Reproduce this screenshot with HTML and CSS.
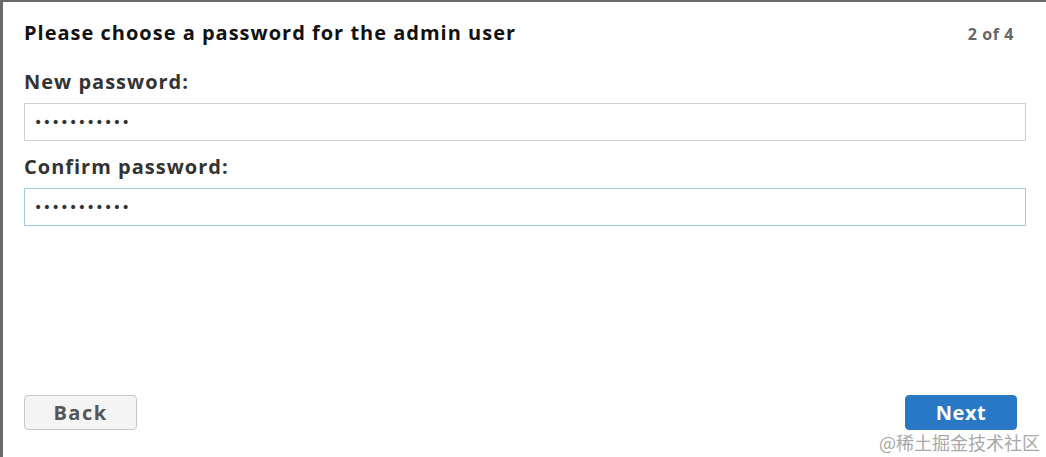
FILE: index.html
```html
<!DOCTYPE html>
<html>
<head>
<meta charset="utf-8">
<link rel="stylesheet" href="styles.css">
</head>
<body>
<div class="frame">
  <div class="dialog">
    <div class="header">
      <h1 class="title">Please choose a password for the admin user</h1>
      <span class="step">2 of 4</span>
    </div>
    <label class="label" for="pw1">New password:</label>
    <input class="field" id="pw1" type="password" value="abcdefghijk">
    <label class="label" for="pw2">Confirm password:</label>
    <input class="field field-focus" id="pw2" type="password" value="abcdefghijk">
    <div class="spacer"></div>
    <div class="actions">
      <button class="btn btn-back">Back</button>
      <button class="btn btn-next">Next</button>
    </div>
  </div>
  <div class="watermark">@稀土掘金技术社区</div>
</div>
</body>
</html>
```
FILE: styles.css
```css
html, body {
  margin: 0;
  padding: 0;
  background: #fff;
}
.frame {
  position: relative;
  width: 1046px;
  height: 457px;
  box-sizing: border-box;
  border-left: 3px solid #6a6a6a;
  border-top: 2px solid #6a6a6a;
  background: #fff;
  font-family: "Open Sans", sans-serif;
}
.dialog {
  display: flex;
  flex-direction: column;
  height: 100%;
  box-sizing: border-box;
  padding: 19px 20px 27px 21px;
}
.header {
  display: flex;
  justify-content: space-between;
  align-items: baseline;
  padding-right: 13px;
}
.title {
  margin: 0;
  font-size: 20px;
  font-weight: 700;
  color: #111;
  line-height: 24px;
  letter-spacing: 1px;
}
.step {
  font-size: 16px;
  font-weight: 700;
  color: #666;
  letter-spacing: 0.6px;
  margin-right: -1px;
}
.label {
  margin-top: 25px;
  font-size: 20px;
  font-weight: 700;
  color: #333;
  line-height: 24px;
  letter-spacing: 1px;
}
.field {
  margin-top: 9px;
  height: 38px;
  box-sizing: border-box;
  border: 1px solid #cfcfcf;
  padding: 0 9px;
  font-family: "DejaVu Sans", sans-serif;
  font-size: 14px;
  letter-spacing: 0.5px;
  color: #333;
  outline: none;
  background: #fff;
}
.field + .label {
  margin-top: 14px;
}
.field-focus {
  border-color: #9ecbe0;
}
.spacer {
  flex: 1;
}
.actions {
  display: flex;
  justify-content: space-between;
  padding-right: 9px;
}
.btn {
  width: 113px;
  height: 35px;
  box-sizing: border-box;
  border-radius: 4px;
  font-family: "Open Sans", sans-serif;
  font-size: 20px;
  font-weight: 700;
  padding: 0;
  line-height: 33px;
}
.btn-back {
  background: #f4f4f4;
  border: 1px solid #c8c8c8;
  color: #555;
  letter-spacing: 1.5px;
}
.btn-next {
  width: 112px;
  background: #2878c6;
  border: 1px solid #2878c6;
  color: #fff;
  letter-spacing: 0.5px;
}
.watermark {
  position: absolute;
  right: 6px;
  bottom: 4px;
  font-family: "Noto Sans CJK SC", sans-serif;
  font-size: 18px;
  color: #a8a8a8;
  line-height: 22px;
}
```
